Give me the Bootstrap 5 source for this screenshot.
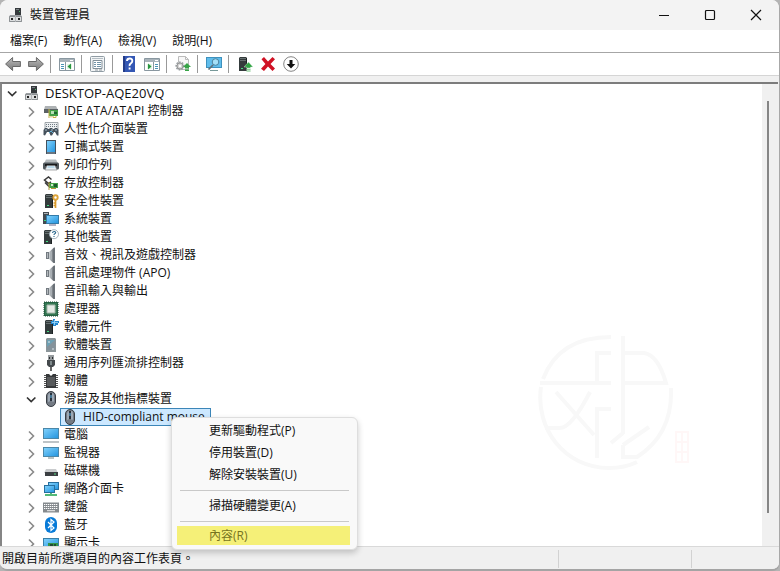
<!DOCTYPE html>
<html lang="zh-Hant">
<head>
<meta charset="utf-8">
<meta name="viewport" content="width=device-width, initial-scale=1">
<title>裝置管理員</title>
<link href="https://cdn.jsdelivr.net/npm/bootstrap@5.3.0/dist/css/bootstrap.min.css" rel="stylesheet">
<style>
  body { background: #b4b4b4; font: 12px/18px "Open Sans", "Noto Sans CJK TC", sans-serif; color: #111; }
  button { font: inherit; color: inherit; background: none; border: 0; padding: 0; }
  svg { display: block; flex: none; }
  .ic { width: 16px; height: 16px; }
  .app-window { background: #f0f0f0; border-right: 1px solid #a8a8a8; border-bottom: 2px solid #a4a4a4; border-radius: 8px; }
  .title-bar { height: 30px; background: #f3f3f3; padding-left: 8px; }
  .title-bar h1 { font-size: 12px; line-height: 18px; margin-left: 6px; font-weight: 400; }
  .win-btn { width: 46px; height: 28px; }
  .menu-bar { height: 23px; background: #fff; border-bottom: 1px solid #a6a6a6; padding-left: 2px; }
  .menu-bar button { padding: 0 8px; }
  .tool-bar { height: 23px; background: #fff; border-bottom: 1px solid #d5d5d5; padding-left: 1px; }
  .tool-btn { width: 23px; height: 22px; }
  .tool-sep { width: 1px; height: 18px; background: #999; margin: 0 4px 0 3px; }
  .tree-frame { margin-top: 6px; border-top: 2px solid #7c7c7c; border-left: 2px solid #858585; margin-right: 1px; }
  .tree-pane { background: #fff; min-width: 0; }
  .tree { padding-left: 2px; }
  .tree ul { padding-left: 19px; }
  .tree-row { height: 18px; white-space: nowrap; }
  .twist { width: 16px; height: 16px; margin-right: 4px; }
  .host { font-size: 13px; }
  .tree-row .ic { margin-right: 5px; }
  .leaf { padding-left: 18px; }
  .picked { background: #cce8ff; border: 1px solid #3c86b8; height: 18px; padding: 0 5px 0 1px; line-height: 16px; }
  .track { width: 16px; background: #f0f0f0; padding: 17px 0 33px 5px; }
  .thumb { width: 2px; background: #858585; }
  .status-bar { height: 23px; background: #f0f0f0; border-top: 1px solid #d9d9d9; padding: 2px 0 0 2px; }
  .status-cell { height: 18px; border-left: 1px solid #d2d2d2; }
  .cell-a { width: 133px; } .cell-b { width: 88px; }
  .seal { right: 69px; bottom: 73px; }
  .ctx { left: 171px; top: 417px; width: 187px; background: #f9f9f9; border: 1px solid #dedede; border-radius: 6px; padding: 2px 5px 4px; box-shadow: 0 3px 6px #0003; }
  .ctx button { width: 100%; height: 22px; padding-left: 32px; text-align: left; }
  .ctx hr { margin: 4px 3px; border-top: 1px solid #c9c9c9; opacity: 1; }
  .ctx .chosen { height: 19px; background: #f5f078; color: #77741f; width: calc(100% - 2px); }
</style>
<script src="https://cdn.jsdelivr.net/npm/bootstrap@5.3.0/dist/js/bootstrap.bundle.min.js"></script>
</head>
<body class="vh-100 overflow-hidden">
<svg width="0" height="0" class="position-absolute" aria-hidden="true">
  <defs>
    <linearGradient id="sky" x2="1" y2="1"><stop stop-color="#7fd0fb"/><stop offset="1" stop-color="#2596e0"/></linearGradient>
    <linearGradient id="steel"><stop stop-color="#d0d4d7"/><stop offset="1" stop-color="#5d646b"/></linearGradient>
    <linearGradient id="gry" y2="1" x2="0"><stop stop-color="#bcbcbc"/><stop offset="1" stop-color="#777"/></linearGradient>
  </defs>
  <symbol id="right" viewBox="0 0 16 16"><path d="M6 4.500l4.500 4.500L6 13.500" fill="none" stroke="#8a8a8a" stroke-width="1.600"/></symbol>
  <symbol id="down" viewBox="0 0 16 16"><path d="M4 6.500l4.200 4 4.200-4" fill="none" stroke="#333" stroke-width="1.700"/></symbol>
  <symbol id="pc" viewBox="0 0 16 16"><path d="M7 1h6v8H7z" fill="#35393c"/><path d="M8 2h3v1H8z" fill="#7a8184"/><path d="M11 4h1v1h-1z" fill="#4fb36b"/><path d="M2 8h11l1 2v5H1v-5z" fill="#9b9fa2"/><path d="M1.500 9.500h12v5h-12z" fill="#dcdedf" stroke="#8e9295"/><path d="M3 11h2v2H3zM10 11h2v2h-2z" fill="#222"/><path d="M7 9h1v6H7z" fill="#b2b5b7"/></symbol>
  <symbol id="ide" viewBox="0 0 16 16"><path d="M2 3h11l2 4H1z" fill="#aeb2b4"/><path d="M1 6h14v4H1z" fill="#5b6165"/><path d="M6 7h9v6H6z" fill="#43a047"/><path d="M8 8h3v3H8z" fill="#b7dfb4"/><path d="M11 9h3v2h-3z" fill="#1e6630"/><path d="M6 6v9M8 13v1.500M10 13v1.500h3V13" stroke="#c5ae45" fill="none"/></symbol>
  <symbol id="hid" viewBox="0 0 16 16"><path d="M2 1.500h13v8H2z" fill="#edf0f2" stroke="#8b9297" stroke-width=".8"/><path d="M3 3.500h11M3 5.500h11" stroke="#6f7a82" stroke-dasharray="1 1"/><path d="M.5 14V9L2 7h2l1 1h1l1-1h2l1 1h1l1-1h2l1.500 2v5.500H14L12 11h-1l-2 3.500H7.500L6 11H4l-2 3.500z" fill="#46525c"/><path d="M2 9h2M8 9h2M12 9h2" stroke="#a6bccb"/><path d="M6 12l2-2 2 2" stroke="#60afd8" fill="none"/></symbol>
  <symbol id="tablet" viewBox="0 0 16 16"><path d="M3 1h10v14H3z" fill="#43515e"/><path d="M4 2h8v11H4z" fill="url(#sky)"/><path d="M4 14h8" stroke="#c6d0d7" stroke-width=".6"/></symbol>
  <symbol id="printer" viewBox="0 0 16 16"><path d="M3 2.500h10l2 4H1z" fill="#b4babd"/><rect y="5.500" x="0" width="16" height="7" rx="1.500" fill="#50575c"/><path d="M2 7h12v2H2z" fill="#17191b"/><path d="M4 8.500h8l2 4.500H2z" fill="#e8f0f5" stroke="#777" stroke-width=".6"/><path d="M4.500 10h7" stroke="#8cc0dd"/></symbol>
  <symbol id="storage" viewBox="0 0 16 16"><path d="M8.500 4.500L5.500 2 1.500 5l4 3.500L8 7M2 7.500l4 4" fill="none" stroke="#3a3a3a" stroke-width="1.500"/><path d="M6 8h9v5H6z" fill="#43a047"/><path d="M8 9h2v2H8z" fill="#cdeacb"/><path d="M11 9h3v3h-3z" fill="#1b5a2d"/><path d="M6 7v8M8 13.500h5" stroke="#b19738"/></symbol>
  <symbol id="tower" viewBox="0 0 16 16"><path d="M2 2l1-1h6l1 1v13H2z" fill="#343b3c"/><path d="M3 2h6v1H3zM3 4h6v1H3z" fill="#677071"/><path d="M4 12h2v1H4z" fill="#45df82"/><path d="M9 2h1v13H9z" fill="#1d2223"/></symbol>
  <symbol id="security" viewBox="0 0 16 16"><use href="#tower"/><circle cx="12.500" cy="4.500" r="2.200" fill="#fff" stroke="#dda43a" stroke-width="1.900"/><path d="M12.500 7v8M12.500 10h-2M12.500 12.500h-2" stroke="#d99a2c" stroke-width="1.700"/></symbol>
  <symbol id="system" viewBox="0 0 16 16"><path d="M0 1h6v12H0z" fill="#424a4f"/><path d="M1 2h4v1H1z" fill="#aab2b6"/><path d="M1 9h2v1H1z" fill="#38d678"/><path d="M3 4h13v9H3z" fill="#347ba8"/><path d="M4 5h11v7H4z" fill="url(#sky)"/><path d="M6 14h7" stroke="#668"/></symbol>
  <symbol id="other" viewBox="0 0 16 16"><g transform="translate(-1)"><use href="#tower"/></g><circle cx="11" cy="5.200" r="4.500" fill="#fff" stroke="#9baab4" stroke-width=".9"/><path d="M9.500 4q.2-1.500 1.700-1.500c2.200 0 1.700 1.800.5 2.300q-.7.300-.7 1.200M11 7v1" fill="none" stroke="#25658b" stroke-width="1.100"/></symbol>
  <symbol id="speaker" viewBox="0 0 16 16"><path d="M3 5h3v7H3z" fill="#737a80"/><path d="M4 6h1v5H4z" fill="#b5babe"/><path d="M6 5l5-4.500v16L6 12z" fill="url(#steel)"/><path d="M11 .5h1v16h-1z" fill="#6b7278"/><path d="M7 6l2-2v9l-2-2z" fill="#a9afb4"/></symbol>
  <symbol id="cpu" viewBox="0 0 16 16"><path d="M1 1h14v14H1z" fill="#286647" stroke="#1c5136" stroke-dasharray="1 1"/><path d="M2 2h12v12H2z" fill="#347853"/><path d="M4 4h8v8H4z" fill="#e5ebe6" stroke="#a7b7ab"/></symbol>
  <symbol id="component" viewBox="0 0 16 16"><use href="#tower"/><path d="M8 2h2V0h2v2h4v2h-1v2h-2v1h-3V5H8z" fill="#2488cf"/><path d="M11.500 1v5M9 3.500h6" stroke="#a4dbfa" stroke-width=".8"/></symbol>
  <symbol id="software" viewBox="0 0 16 16"><path d="M3 2l1-1h8l1 1v13H3z" fill="#8b9599"/><path d="M4 3h8v10H4z" fill="#6ca0b4"/><path d="M4 10l8-7v10H4z" fill="#84929b"/><path d="M5 5h2M9 12h2" stroke="#dce5e9"/></symbol>
  <symbol id="usb" viewBox="0 0 16 16"><path d="M5 0h6v5H5z" fill="#969b9e"/><path d="M6 2h1v2H6zM9 2h1v2H9z" fill="#292c2e"/><path d="M4 5h8v5l-2 2H6l-2-2z" fill="#44494c"/><path d="M8 12v4" stroke="#555" stroke-width="1.800"/><path d="M8 6v4" stroke="#bcc"/></symbol>
  <symbol id="firmware" viewBox="0 0 16 16"><path d="M2.500 2v13M13.500 2v13" stroke="#555" stroke-width="3" stroke-dasharray="1 1"/><path d="M3 1h3l2 2 2-2h3v14H3z" fill="#37393b"/><path d="M4 4h8v9H4z" fill="#57595b"/></symbol>
  <symbol id="mouse" viewBox="0 0 16 16"><rect x="3.500" y=".5" width="9" height="15" rx="4.500" fill="#747b84" stroke="#383d44"/><path d="M5 4q1-2 2-2v8q-2 2-2 0zM9 2q2 0 2 3v5q-1 2-2 0" fill="#9da8b4"/><path d="M7 2h2v8H7z" fill="#29323c"/><path d="M8 4v3" stroke="#61b9ed"/></symbol>
  <symbol id="monitor" viewBox="0 0 16 16"><path d="M0 2h16v10H0z" fill="#4b87a8"/><path d="M1 3h14v8H1z" fill="url(#sky)"/><path d="M5 13h6" stroke="#788"/></symbol>
  <symbol id="computer" viewBox="0 0 16 16"><path d="M0 1h16v11H0z" fill="#4b87a8"/><path d="M1 2h14v9H1z" fill="url(#sky)"/><path d="M0 15h16" stroke="#9ba4a9" stroke-width="1.300"/></symbol>
  <symbol id="disk" viewBox="0 0 16 16"><path d="M3 6h10l2 4H1z" fill="#c9cbcd"/><path d="M2 9h13v4H2z" fill="#3b3f42"/><path d="M11 11h2" stroke="#5bdb86"/></symbol>
  <symbol id="network" viewBox="0 0 16 16"><path d="M5 1h11v8H5z" fill="#276f9e"/><path d="M6 2h9v6H6z" fill="url(#sky)"/><path d="M1 4h11v8H1z" fill="#276f9e"/><path d="M2 5h9v6H2z" fill="url(#sky)"/><path d="M2 14h12M8 12v3" stroke="#54b978" stroke-width="2"/></symbol>
  <symbol id="keyboard" viewBox="0 0 16 16"><path d="M0 3.500h16v10H0z" fill="#858a8e"/><path d="M1 5.500h14M1 7.500h14M1 9.500h14" stroke="#fff" stroke-width="1.200" stroke-dasharray="1.300 .7"/><path d="M4 11.700h8" stroke="#eee"/></symbol>
  <symbol id="bluetooth" viewBox="0 0 16 16"><rect x="2" y="0" width="12" height="16" rx="6" fill="#087bd8"/><path d="M5 5l6 6-3 2.500v-11L11 5l-6 6" fill="none" stroke="#fff" stroke-width="1.200"/></symbol>
  <symbol id="display" viewBox="0 0 16 16"><path d="M0 3h16v10H0z" fill="#397fa7"/><path d="M1 4h14v8H1z" fill="url(#sky)"/><path d="M5 8h10v5H5z" fill="#31934a"/><path d="M7 9h3v3H7zM11 9h2v3h-2z" fill="#234a34"/></symbol>
  <symbol id="arrow" viewBox="0 0 16 16"><path d="M.6 8l7-6.500v4h7.800v5H7.600v4z" fill="url(#gry)" stroke="#686868"/></symbol>
  <symbol id="panel" viewBox="0 0 16 16"><path d="M.5 2.500h15v12H.5z" fill="#fff" stroke="#8997a0"/><path d="M1 3h14v3H1z" fill="#a8b3ba"/><path d="M11 4.500h3" stroke="#fff"/><path d="M6.500 6v8" stroke="#8997a0"/><path d="M2 8.500h3M2 10.500h3M2 12.500h3" stroke="#4a94b6"/><path d="M8 8h5v5H8z" fill="#e2f4e4"/><path d="M12 7.500v6L8.500 10.500z" fill="#28963f"/></symbol>
</svg>

<main class="app-window position-relative d-flex flex-column vh-100 overflow-hidden">
  <header class="title-bar d-flex align-items-center flex-shrink-0">
    <svg class="ic"><use href="#pc"/></svg>
    <h1 class="mb-0 me-auto">裝置管理員</h1>
    <button class="win-btn d-flex align-items-center justify-content-center" aria-label="最小化"><svg width="12" height="12"><path d="M1 6.500h10" stroke="#111"/></svg></button>
    <button class="win-btn d-flex align-items-center justify-content-center" aria-label="最大化"><svg width="12" height="12"><rect x="1.500" y="1.500" width="9" height="9" rx="1" fill="none" stroke="#111" stroke-width="1.200"/></svg></button>
    <button class="win-btn d-flex align-items-center justify-content-center" aria-label="關閉"><svg width="12" height="12"><path d="M1 1l10 10M11 1L1 11" stroke="#111" stroke-width="1.200"/></svg></button>
  </header>

  <nav class="menu-bar d-flex align-items-center flex-shrink-0" aria-label="功能表">
    <button>檔案(F)</button><button>動作(A)</button><button>檢視(V)</button><button>說明(H)</button>
  </nav>

  <div class="tool-bar d-flex align-items-center flex-shrink-0" role="toolbar" aria-label="工具列">
    <button class="tool-btn d-flex align-items-center justify-content-center" aria-label="上一頁"><svg class="ic"><use href="#arrow"/></svg></button>
    <button class="tool-btn d-flex align-items-center justify-content-center" aria-label="下一頁"><svg class="ic" viewBox="0 0 16 16"><path d="M15.400 8l-7-6.500v4H.6v5h7.800v4z" fill="url(#gry)" stroke="#686868"/></svg></button>
    <span class="tool-sep"></span>
    <button class="tool-btn d-flex align-items-center justify-content-center" aria-label="顯示主控台樹狀目錄"><svg class="ic"><use href="#panel"/></svg></button>
    <span class="tool-sep"></span>
    <button class="tool-btn d-flex align-items-center justify-content-center" aria-label="內容"><svg class="ic" viewBox="0 0 16 16"><rect x=".5" y=".5" width="14" height="15" rx="1" fill="#f3f5f6" stroke="#909ca4"/><path d="M3 4.500h9v8H3z" fill="#fff" stroke="#82909a"/><path d="M2 2.500h11" stroke="#b5bec4"/><path d="M4 6.500h2M7 6.500h4M4 8.500h2M7 8.500h4M4 10.500h2M7 10.500h4" stroke="#7193a8"/><path d="M5 14h3M9 14h3" stroke="#90999f"/></svg></button>
    <span class="tool-sep"></span>
    <button class="tool-btn d-flex align-items-center justify-content-center" aria-label="說明"><svg class="ic" viewBox="0 0 16 16"><path d="M2 0h12v16H2z" fill="#3457b4"/><path d="M2 0h2v16H2z" fill="#243c88"/><path d="M6 5q0-2.500 2.700-2.500T11.300 5q0 1.500-1.500 2.400T8.600 10M8.600 11.500v2" fill="none" stroke="#fff" stroke-width="1.900"/></svg></button>
    <button class="tool-btn d-flex align-items-center justify-content-center" aria-label="顯示動作窗格"><svg class="ic" viewBox="0 0 16 16"><path d="M.5 2.500h15v12H.5z" fill="#fff" stroke="#8997a0"/><path d="M1 3h14v3H1z" fill="#a8b3ba"/><path d="M11 4.500h3" stroke="#fff"/><path d="M9.500 6v8" stroke="#8997a0"/><path d="M11 8.500h3M11 10.500h3M11 12.500h3" stroke="#4a94b6"/><path d="M3 8h5v5H3z" fill="#e2f4e4"/><path d="M4 7.500v6l3.500-3z" fill="#28963f"/></svg></button>
    <span class="tool-sep"></span>
    <button class="tool-btn d-flex align-items-center justify-content-center" aria-label="更新驅動程式"><svg class="ic" viewBox="0 0 16 16"><path d="M3.500.5h7l3 3v10h-10z" fill="#f7f7f7" stroke="#bbb"/><path d="M10.500.5v3h3" fill="none" stroke="#bbb"/><circle cx="5" cy="10" r="3.600" fill="#ddd" stroke="#999fa3" stroke-width="2" stroke-dasharray="1.600 1"/><circle cx="5" cy="10" r="3" fill="#d4d4d4" stroke="#999"/><circle cx="5" cy="10" r="1.200" fill="#fff"/><path d="M12 7l4 4h-2v1.500h-4V11H8zM10 13.500h4V15h-4z" fill="#37a447"/></svg></button>
    <span class="tool-sep"></span>
    <button class="tool-btn d-flex align-items-center justify-content-center" aria-label="掃描硬體變更"><svg class="ic" viewBox="0 0 16 16"><path d="M0 1h16v11H0z" fill="#3e91bd"/><path d="M1 2h14v9H1z" fill="#5fbdec"/><path d="M4 14h8v1H4z" fill="#799"/><circle cx="9.500" cy="6" r="3.300" fill="#a5e0f8" stroke="#4c829e"/><path d="M7 9l-4.500 4.500" stroke="#60717a" stroke-width="1.700"/></svg></button>
    <span class="tool-sep"></span>
    <button class="tool-btn d-flex align-items-center justify-content-center" aria-label="啟用裝置"><svg class="ic" viewBox="0 0 16 16"><use href="#tower"/><path d="M11.500 6l4.500 5h-2.500v1h-4v-1H7zM9.500 12.700h4v1h-4zM9.500 14.500h4v1h-4z" fill="#2fa343" stroke="#e4f6e5" stroke-width=".4"/></svg></button>
    <button class="tool-btn d-flex align-items-center justify-content-center" aria-label="解除安裝裝置"><svg class="ic" viewBox="0 0 16 16"><path d="M1.500 3.200L4 1 8 5.500 12.500 1 15 3.300 10.500 8l4.500 4.500-2.500 2.500L8 10.500 4 15l-3-2.300L5.400 8z" fill="#d01224"/></svg></button>
    <button class="tool-btn d-flex align-items-center justify-content-center" aria-label="停用裝置"><svg class="ic" viewBox="0 0 16 16"><circle cx="8" cy="8" r="7.300" fill="#fff" stroke="#777" stroke-width=".9"/><path d="M6.500 4h3v4h2.800L8 12.500 3.700 8h2.800z" fill="#111"/></svg></button>
  </div>

  <section class="tree-frame d-flex flex-fill overflow-hidden">
    <div class="tree-pane position-relative flex-fill overflow-hidden">
      <svg class="seal position-absolute" width="156" height="140" viewBox="0 0 156 140" fill="none" stroke="#f8f8f8" stroke-width="4" aria-hidden="true">
        <path d="M6 46Q22 4 74 4M4 54C-2 96 28 135 72 135Q88 135 100 129M86 3v98M3 50h71M86 50h43q-8-28-22-30H86M74 20H60v30M74 76H60v49M19 59l38 43M53 59Q34 96 22 95H8M74 110l12-10M86 112l26-18M134 55q2 46-34 69H86v-12"/>
        <path d="M139 99h12v30h-12zM139 109h12M139 119h12M145 99v30" stroke="#fff7f7" stroke-width="2"/>
      </svg>
      <ul class="tree list-unstyled mb-0 position-relative">
        <li>
          <div class="tree-row host d-flex align-items-center"><button class="twist" aria-label="摺疊"><svg class="ic m-0"><use href="#down"/></svg></button><svg class="ic"><use href="#pc"/></svg>DESKTOP-AQE20VQ</div>
          <ul class="list-unstyled">
            <li class="tree-row d-flex align-items-center"><button class="twist" aria-label="展開"><svg class="ic"><use href="#right"/></svg></button><svg class="ic"><use href="#ide"/></svg>IDE ATA/ATAPI 控制器</li>
            <li class="tree-row d-flex align-items-center"><button class="twist" aria-label="展開"><svg class="ic"><use href="#right"/></svg></button><svg class="ic"><use href="#hid"/></svg>人性化介面裝置</li>
            <li class="tree-row d-flex align-items-center"><button class="twist" aria-label="展開"><svg class="ic"><use href="#right"/></svg></button><svg class="ic"><use href="#tablet"/></svg>可攜式裝置</li>
            <li class="tree-row d-flex align-items-center"><button class="twist" aria-label="展開"><svg class="ic"><use href="#right"/></svg></button><svg class="ic"><use href="#printer"/></svg>列印佇列</li>
            <li class="tree-row d-flex align-items-center"><button class="twist" aria-label="展開"><svg class="ic"><use href="#right"/></svg></button><svg class="ic"><use href="#storage"/></svg>存放控制器</li>
            <li class="tree-row d-flex align-items-center"><button class="twist" aria-label="展開"><svg class="ic"><use href="#right"/></svg></button><svg class="ic"><use href="#security"/></svg>安全性裝置</li>
            <li class="tree-row d-flex align-items-center"><button class="twist" aria-label="展開"><svg class="ic"><use href="#right"/></svg></button><svg class="ic"><use href="#system"/></svg>系統裝置</li>
            <li class="tree-row d-flex align-items-center"><button class="twist" aria-label="展開"><svg class="ic"><use href="#right"/></svg></button><svg class="ic"><use href="#other"/></svg>其他裝置</li>
            <li class="tree-row d-flex align-items-center"><button class="twist" aria-label="展開"><svg class="ic"><use href="#right"/></svg></button><svg class="ic"><use href="#speaker"/></svg>音效、視訊及遊戲控制器</li>
            <li class="tree-row d-flex align-items-center"><button class="twist" aria-label="展開"><svg class="ic"><use href="#right"/></svg></button><svg class="ic"><use href="#speaker"/></svg>音訊處理物件 (APO)</li>
            <li class="tree-row d-flex align-items-center"><button class="twist" aria-label="展開"><svg class="ic"><use href="#right"/></svg></button><svg class="ic"><use href="#speaker"/></svg>音訊輸入與輸出</li>
            <li class="tree-row d-flex align-items-center"><button class="twist" aria-label="展開"><svg class="ic"><use href="#right"/></svg></button><svg class="ic"><use href="#cpu"/></svg>處理器</li>
            <li class="tree-row d-flex align-items-center"><button class="twist" aria-label="展開"><svg class="ic"><use href="#right"/></svg></button><svg class="ic"><use href="#component"/></svg>軟體元件</li>
            <li class="tree-row d-flex align-items-center"><button class="twist" aria-label="展開"><svg class="ic"><use href="#right"/></svg></button><svg class="ic"><use href="#software"/></svg>軟體裝置</li>
            <li class="tree-row d-flex align-items-center"><button class="twist" aria-label="展開"><svg class="ic"><use href="#right"/></svg></button><svg class="ic"><use href="#usb"/></svg>通用序列匯流排控制器</li>
            <li class="tree-row d-flex align-items-center"><button class="twist" aria-label="展開"><svg class="ic"><use href="#right"/></svg></button><svg class="ic"><use href="#firmware"/></svg>韌體</li>
            <li>
              <div class="tree-row d-flex align-items-center"><button class="twist" aria-label="摺疊"><svg class="ic m-0"><use href="#down"/></svg></button><svg class="ic"><use href="#mouse"/></svg>滑鼠及其他指標裝置</div>
              <ul class="list-unstyled">
                <li class="tree-row leaf d-flex"><button class="picked d-flex align-items-center"><svg class="ic"><use href="#mouse"/></svg>HID-compliant mouse</button></li>
              </ul>
            </li>
            <li class="tree-row d-flex align-items-center"><button class="twist" aria-label="展開"><svg class="ic"><use href="#right"/></svg></button><svg class="ic"><use href="#computer"/></svg>電腦</li>
            <li class="tree-row d-flex align-items-center"><button class="twist" aria-label="展開"><svg class="ic"><use href="#right"/></svg></button><svg class="ic"><use href="#monitor"/></svg>監視器</li>
            <li class="tree-row d-flex align-items-center"><button class="twist" aria-label="展開"><svg class="ic"><use href="#right"/></svg></button><svg class="ic"><use href="#disk"/></svg>磁碟機</li>
            <li class="tree-row d-flex align-items-center"><button class="twist" aria-label="展開"><svg class="ic"><use href="#right"/></svg></button><svg class="ic"><use href="#network"/></svg>網路介面卡</li>
            <li class="tree-row d-flex align-items-center"><button class="twist" aria-label="展開"><svg class="ic"><use href="#right"/></svg></button><svg class="ic"><use href="#keyboard"/></svg>鍵盤</li>
            <li class="tree-row d-flex align-items-center"><button class="twist" aria-label="展開"><svg class="ic"><use href="#right"/></svg></button><svg class="ic"><use href="#bluetooth"/></svg>藍牙</li>
            <li class="tree-row d-flex align-items-center"><button class="twist" aria-label="展開"><svg class="ic"><use href="#right"/></svg></button><svg class="ic"><use href="#display"/></svg>顯示卡</li>
          </ul>
        </li>
      </ul>
    </div>
    <div class="track d-flex flex-shrink-0"><div class="thumb"></div></div>
  </section>

  <footer class="status-bar d-flex align-items-center flex-shrink-0">
    <span class="me-auto">開啟目前所選項目的內容工作表頁。</span>
    <span class="status-cell cell-a"></span><span class="status-cell cell-b"></span>
  </footer>

  <div class="ctx position-absolute" role="menu">
    <button role="menuitem" class="d-block">更新驅動程式(P)</button>
    <button role="menuitem" class="d-block">停用裝置(D)</button>
    <button role="menuitem" class="d-block">解除安裝裝置(U)</button>
    <hr>
    <button role="menuitem" class="d-block">掃描硬體變更(A)</button>
    <hr>
    <button role="menuitem" class="chosen d-flex align-items-center">內容(R)</button>
  </div>
</main>
</body>
</html>
